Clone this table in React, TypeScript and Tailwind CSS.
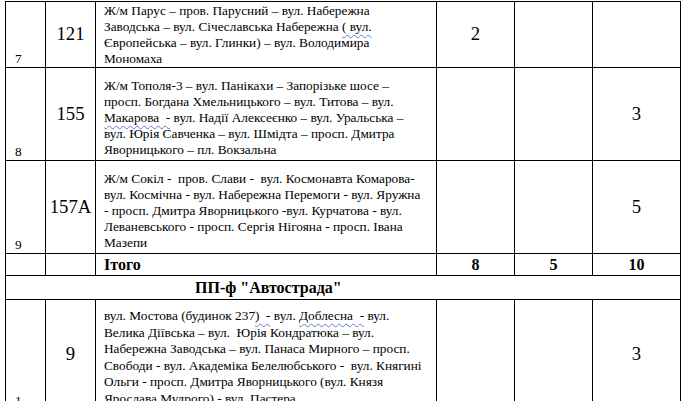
import React from "react";

const W = ({ children }: { children: React.ReactNode }) => (
  <span className="underline decoration-wavy decoration-[#5b7fd6] decoration-1 underline-offset-[3px]">
    {children}
  </span>
);

export default function App() {
  const td = "border border-black p-0 [font-family:'Liberation_Serif','Times_New_Roman',serif]";
  return (
    <div className="w-[685px] h-[401px] overflow-hidden bg-white pl-[5px] pt-px text-black [font-family:'Liberation_Serif','Times_New_Roman',serif]">
      <table className="table-fixed border-collapse w-[675px] [font-family:'Liberation_Serif','Times_New_Roman',serif] text-black">
        <colgroup>
          <col className="w-[40px]" />
          <col className="w-[50px]" />
          <col className="w-[341px]" />
          <col className="w-[78px]" />
          <col className="w-[78px]" />
          <col className="w-[88px]" />
        </colgroup>
        <tbody>
          {/* Row 7 */}
          <tr className="h-[63px]">
            <td className={`${td} align-bottom pl-[9px] text-[13.3px] leading-[16px]`}>7</td>
            <td className={`${td} text-center align-middle text-[18.7px]`}>121</td>
            <td className={`${td} align-top pl-[8px] pt-[1px] text-[13.3px] leading-[16px]`}>
              Ж/м Парус – пров. Парусний – вул. Набережна
              <br />
              Заводська – вул. Січеславська Набережна <W>( вул.</W>
              <br />
              Європейська – вул. Глинки) – вул. Володимира
              <br />
              Мономаха
            </td>
            <td className={`${td} text-center align-middle text-[18.7px]`}>2</td>
            <td className={td}></td>
            <td className={td}></td>
          </tr>
          {/* Row 8 */}
          <tr className="h-[93px]">
            <td className={`${td} align-bottom pl-[9px] text-[13.3px] leading-[16px]`}>8</td>
            <td className={`${td} text-center align-middle text-[18.7px]`}>155</td>
            <td className={`${td} align-top pl-[8px] pt-[10px] text-[13.3px] leading-[16px]`}>
              Ж/м Тополя-3 – вул. Панікахи – Запорізьке шосе –
              <br />
              просп. Богдана Хмельницького – вул. Титова – вул.
              <br />
              <W>Макарова&nbsp; -</W> вул. Надії Алексеєнко – вул. Уральська –
              <br />
              вул. Юрія Савченка – вул. Шмідта – просп. Дмитра
              <br />
              Яворницького – пл. Вокзальна
            </td>
            <td className={td}></td>
            <td className={td}></td>
            <td className={`${td} text-center align-middle text-[18.7px]`}>3</td>
          </tr>
          {/* Row 9 */}
          <tr className="h-[93px]">
            <td className={`${td} align-bottom pl-[9px] text-[13.3px] leading-[16px]`}>9</td>
            <td className={`${td} text-center align-middle text-[18.7px]`}>157А</td>
            <td className={`${td} align-top pl-[8px] pt-[10px] text-[13.3px] leading-[16px]`}>
              Ж/м Сокіл -&nbsp; пров. Слави -&nbsp; вул. Космонавта Комарова-
              <br />
              вул. Космічна - вул. Набережна Перемоги - вул. Яружна
              <br />
              - просп. Дмитра Яворницького -вул. Курчатова - вул.
              <br />
              Леваневського - просп. Сергія Нігояна - просп. Івана
              <br />
              Мазепи
            </td>
            <td className={td}></td>
            <td className={td}></td>
            <td className={`${td} text-center align-middle text-[18.7px]`}>5</td>
          </tr>
          {/* Itogo */}
          <tr className="h-[22px]">
            <td className={td}></td>
            <td className={td}></td>
            <td className={`${td} align-middle pl-[8px] text-[16px] font-bold leading-[20px]`}>Ітого</td>
            <td className={`${td} text-center align-middle text-[16px] font-bold leading-[20px]`}>8</td>
            <td className={`${td} text-center align-middle text-[16px] font-bold leading-[20px]`}>5</td>
            <td className={`${td} text-center align-middle text-[16px] font-bold leading-[20px]`}>10</td>
          </tr>
          {/* Autostrada */}
          <tr className="h-[24px]">
            <td colSpan={6} className={`${td} align-middle pl-[189px] text-[16px] font-bold leading-[20px]`}>
              ПП-ф "Автострада"
            </td>
          </tr>
          {/* Last row */}
          <tr className="h-[110px]">
            <td className={`${td} align-bottom pl-[9px] text-[13.3px] leading-[16px]`}>1</td>
            <td className={`${td} text-center align-middle text-[18.7px]`}>9</td>
            <td className={`${td} align-top pl-[8px] pt-[8px] text-[13.3px] leading-[16.6px]`}>
              вул. Мостова (будинок 237<W>)&nbsp; -</W> вул. <W>Доблесна&nbsp; -</W> вул.
              <br />
              Велика Діївська – вул.&nbsp; Юрія Кондратюка – вул.
              <br />
              Набережна Заводська – вул. Панаса Мирного – просп.
              <br />
              Свободи - вул. Академіка Белелюбського -&nbsp; вул. Княгині
              <br />
              Ольги - просп. Дмитра Яворницького (вул. Князя
              <br />
              Ярослава Мудрого) - вул. Пастера
            </td>
            <td className={td}></td>
            <td className={td}></td>
            <td className={`${td} text-center align-middle text-[18.7px]`}>3</td>
          </tr>
        </tbody>
      </table>
    </div>
  );
}
